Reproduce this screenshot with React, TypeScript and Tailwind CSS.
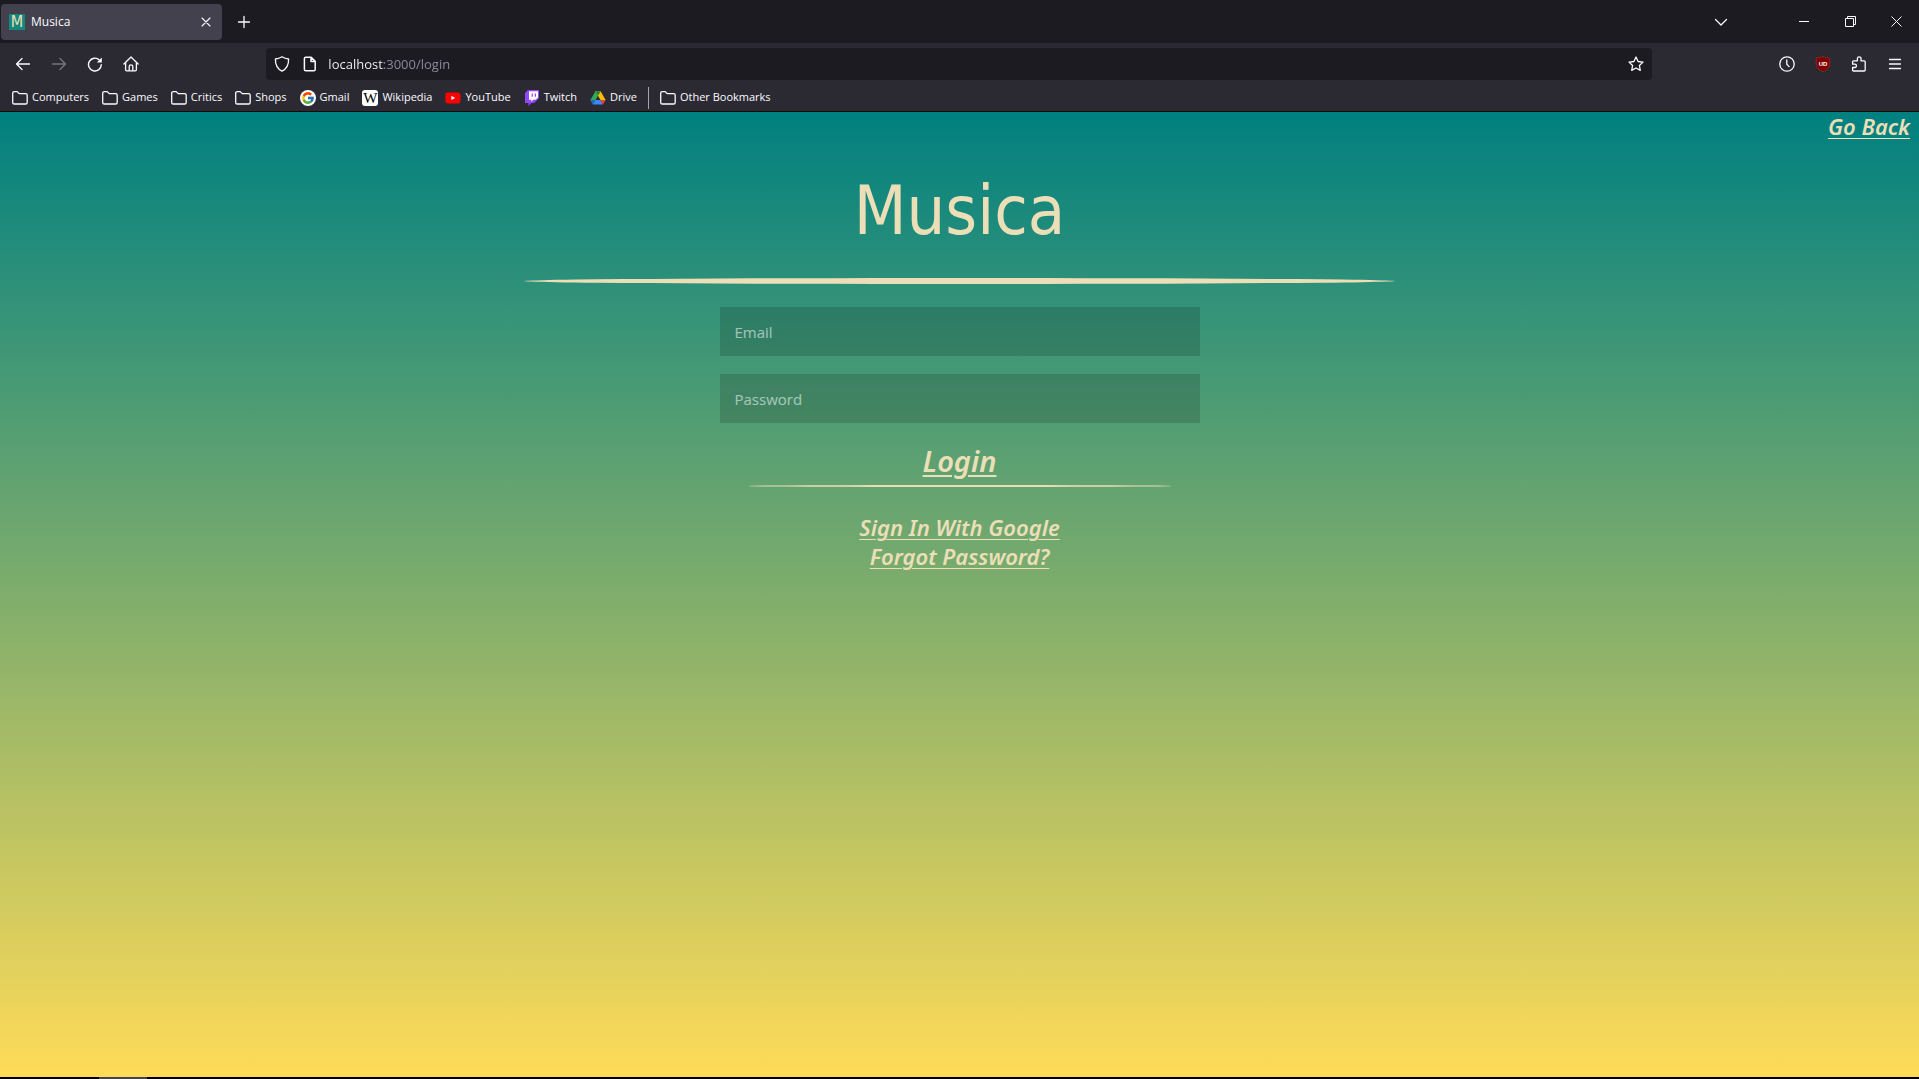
import type { ReactNode } from "react";
import { FcGoogle } from "react-icons/fc";

const uiFont = "font-['Open_Sans','Noto_Sans',sans-serif]";
const linkStyle =
  "text-[#ecdfb8] underline decoration-1 underline-offset-[3px] font-['Noto_Sans',sans-serif] italic font-semibold";

function Line({ d, width = 1.3 }: { d: string; width?: number }) {
  return (
    <svg
      width="16"
      height="16"
      viewBox="0 0 16 16"
      fill="none"
      stroke="currentColor"
      strokeWidth={width}
      strokeLinecap="round"
      strokeLinejoin="round"
      aria-hidden="true"
      className="shrink-0"
    >
      <path d={d} />
    </svg>
  );
}

function Folder() {
  return (
    <Line d="M.7 3.2a1.6 1.6 0 0 1 1.6-1.6h2.9l2 2h6.4a1.6 1.6 0 0 1 1.6 1.6v7.2a1.6 1.6 0 0 1-1.6 1.6H2.3a1.6 1.6 0 0 1-1.6-1.6z" />
  );
}

function Wikipedia() {
  return (
    <span className="flex size-4 items-center justify-center rounded-[3px] bg-white font-['Liberation_Serif',serif] text-[15px] leading-4 text-black">
      W
    </span>
  );
}

function YouTube() {
  return (
    <svg width="16" height="16" viewBox="0 0 16 16" aria-hidden="true">
      <rect x="0.3" y="2.4" width="15.2" height="11" rx="2.8" fill="#f00" />
      <path d="M6.4 5.8v4.2l3.7-2.1z" fill="#fff" />
    </svg>
  );
}

function Twitch() {
  return (
    <svg width="16" height="16" viewBox="0 0 16 16" aria-hidden="true">
      <path d="M4 0 1 3v10h3.5v3l3-3h2.6L15 8.2V0z" fill="#9146ff" />
      <path d="M5 1.2v8.6h2.3v2l2-2h2.4L14 7.6V1.2z" fill="#fff" />
      <path d="M8.2 3.4v3.4M11.4 3.4v3.4" stroke="#9146ff" strokeWidth="1.2" />
    </svg>
  );
}

function Drive() {
  return (
    <svg width="16" height="16" viewBox="0 0 16 16" aria-hidden="true">
      <path d="M5.4 1.2h5.2L8 5.7 3 14.5.4 10z" fill="#34a853" />
      <path d="M5.4 1.2h5.2L15.6 10h-5.1z" fill="#fbbc04" />
      <path d="M5.4 1.2h5.2L8 5.8z" fill="#188038" />
      <path d="M.4 10h5.1L3 14.5z" fill="#1967d2" />
      <path d="M5.5 10h5l2.5 4.5H3z" fill="#4285f4" />
      <path d="M10.5 10h5.1L13 14.5z" fill="#ea4335" />
    </svg>
  );
}

function Gmail() {
  return (
    <span className="flex size-4 items-center justify-center rounded-full bg-white">
      <FcGoogle size={14} />
    </span>
  );
}

const bookmarks: { label: string; icon: ReactNode }[] = [
  { label: "Computers", icon: <Folder /> },
  { label: "Games", icon: <Folder /> },
  { label: "Critics", icon: <Folder /> },
  { label: "Shops", icon: <Folder /> },
  { label: "Gmail", icon: <Gmail /> },
  { label: "Wikipedia", icon: <Wikipedia /> },
  { label: "YouTube", icon: <YouTube /> },
  { label: "Twitch", icon: <Twitch /> },
  { label: "Drive", icon: <Drive /> },
];

function Bookmark({ label, icon }: { label: string; icon: ReactNode }) {
  return (
    <a href="#" className="flex items-center gap-1 whitespace-nowrap">
      {icon}
      {label}
    </a>
  );
}

function ToolButton({ label, dim, children }: { label: string; dim?: boolean; children: ReactNode }) {
  return (
    <button
      type="button"
      aria-label={label}
      disabled={dim}
      className={
        dim
          ? "flex h-8 w-9 shrink-0 items-center justify-center text-[#77767e]"
          : "flex h-8 w-9 shrink-0 items-center justify-center"
      }
    >
      {children}
    </button>
  );
}

function WindowButton({ label, children }: { label: string; children: ReactNode }) {
  return (
    <button type="button" aria-label={label} className="flex h-full w-[46px] items-center justify-center">
      <svg width="11" height="11" viewBox="0 0 11 11" fill="none" stroke="currentColor" aria-hidden="true">
        {children}
      </svg>
    </button>
  );
}

function TitleBar() {
  return (
    <div className="flex h-[43px] items-center bg-[#1c1b22]">
      <div className="ml-px flex h-9 w-[221px] items-center gap-1.5 rounded bg-[#42414d] px-2">
        <span className="flex size-4 items-center justify-center bg-[#15877c] font-['DejaVu_Sans_Condensed',sans-serif] text-base leading-4 text-[#ecdfb8]">
          M
        </span>
        <span className="flex-1">Musica</span>
        <button type="button" aria-label="Close tab" className="flex size-4 items-center justify-center">
          <Line d="M4 4l8 8M12 4l-8 8" width={1.1} />
        </button>
      </div>
      <button type="button" aria-label="New tab" className="ml-[10px] flex size-6 items-center justify-center">
        <Line d="M8 2.5v11M2.5 8h11" />
      </button>
      <div className="ml-auto flex h-full items-center">
        <button type="button" aria-label="List all tabs" className="mr-10 flex h-8 w-10 items-center justify-center">
          <Line d="M2.5 5.5 8 11l5.5-5.5" />
        </button>
        <WindowButton label="Minimize">
          <path d="M0 5.5h10" />
        </WindowButton>
        <WindowButton label="Restore">
          <path d="M.5 2.5h8v8h-8zM2.5 2.5v-2h8v8h-2" />
        </WindowButton>
        <WindowButton label="Close">
          <path d="M.5.5l10 10M10.5.5l-10 10" />
        </WindowButton>
      </div>
    </div>
  );
}

function NavBar() {
  return (
    <div className="flex h-[41px] items-center pl-[5px] pr-1.5">
      <ToolButton label="Back">
        <Line d="M14.5 8H1.5M7 2.5 1.5 8 7 13.5" />
      </ToolButton>
      <ToolButton label="Forward" dim>
        <Line d="M1.5 8h13M9 2.5 14.5 8 9 13.5" />
      </ToolButton>
      <ToolButton label="Reload">
        <svg
          width="16"
          height="16"
          viewBox="0 0 16 16"
          fill="none"
          stroke="currentColor"
          strokeWidth="1.4"
          strokeLinecap="round"
          aria-hidden="true"
        >
          <path d="M14.3 8.6A6.4 6.4 0 1 1 12.4 4" />
          <path d="M14.8 1.4v5H9.8z" fill="currentColor" stroke="none" />
        </svg>
      </ToolButton>
      <ToolButton label="Home">
        <Line d="M.9 8 8 1l7.1 7M2.6 6.5v7.3a1 1 0 0 0 1 1h8.8a1 1 0 0 0 1-1V6.5M6.2 14.6v-4a1.8 1.8 0 0 1 3.6 0v4" />
      </ToolButton>
      <div className="flex-[3]" />
      <div className="flex h-8 flex-[35] items-center rounded bg-[#1c1b22] px-2">
        <Line d="M8 .8c2 1.3 4 2 6.6 2.2.2 5.6-1.6 9.6-6.6 12.2C3 12.6 1.2 8.6 1.4 3 4 2.8 6 2.1 8 .8z" />
        <span className="w-3" />
        <Line
          d="M3.8 1.2h5.4l4 4v8.2a1.4 1.4 0 0 1-1.4 1.4H3.8a1.4 1.4 0 0 1-1.4-1.4V2.6a1.4 1.4 0 0 1 1.4-1.4zM9 1.2v4.2h4.2z"
          width={1.5}
        />
        <input
          aria-label="Address"
          defaultValue="localhost:3000/login"
          className="ml-[10px] block min-w-0 flex-1 bg-[linear-gradient(to_right,#fbfbfe_56px,#8f8f97_56px)] bg-clip-text text-[13px] leading-5 text-transparent caret-white outline-none"
        />
        <button type="button" aria-label="Bookmark this page">
          <Line d="M8 1l2.1 4.5 4.9.6-3.6 3.4.9 4.9L8 12l-4.3 2.4.9-4.9L1 6.1l4.9-.6z" />
        </button>
      </div>
      <div className="flex-[3]" />
      <ToolButton label="History">
        <Line d="M8 .8a7.2 7.2 0 1 1 0 14.4A7.2 7.2 0 0 1 8 .8zM7.8 4v4.3l2.3 2.3" />
      </ToolButton>
      <ToolButton label="Ad blocker">
        <svg width="16" height="16" viewBox="0 0 16 16" aria-hidden="true">
          <path
            d="M8 .3c2 1.3 4 1.7 6.8 1.7v6c0 4-2.8 6-6.8 7.7C4 14 1.2 12 1.2 8V2C4 2 6 1.6 8 .3z"
            fill="#800000"
            stroke="#a33c3c"
            strokeWidth="0.5"
          />
          <text x="8" y="10" textAnchor="middle" fontSize="6" fontWeight="700" fontFamily="Liberation Sans" fill="#fff">
            UD
          </text>
        </svg>
      </ToolButton>
      <ToolButton label="Extensions">
        <Line d="M2.6 15h10.6a1 1 0 0 0 1-1V5.8a1 1 0 0 0-1-1H10V2.6a1.8 1.8 0 0 0-3.6 0v2.2H2.6a1 1 0 0 0-1 1v2.4h2.2a1.6 1.6 0 0 1 0 3.3H1.6V14a1 1 0 0 0 1 1z" />
      </ToolButton>
      <ToolButton label="Menu">
        <Line d="M2.5 3.5h11M2.5 8h11M2.5 12.5h11" />
      </ToolButton>
    </div>
  );
}

function Field({ label, type }: { label: string; type: string }) {
  return (
    <input
      type={type}
      aria-label={label}
      placeholder={label}
      className="mb-[18px] block h-[49px] w-full bg-black/15 px-[15px] font-['Open_Sans',sans-serif] text-[15px] text-white outline-none placeholder:text-white/55"
    />
  );
}

export default function App() {
  return (
    <div className="flex min-h-screen flex-col">
      <header className={`${uiFont} border-b border-[#0c0c0d] bg-[#2b2a33] text-xs text-[#fbfbfe]`}>
        <TitleBar />
        <NavBar />
        <nav className="flex h-[27px] items-center gap-[13px] pl-3 text-[11px]">
          {bookmarks.map((b) => (
            <Bookmark key={b.label} label={b.label} icon={b.icon} />
          ))}
          <span className="-mx-0.5 h-[22px] w-px bg-[#a5a5ab]" />
          <Bookmark label="Other Bookmarks" icon={<Folder />} />
        </nav>
      </header>

      <main className="flex flex-1 flex-col bg-linear-to-b/srgb from-[#008080] to-[#ffdb58]">
        <a href="#" className={`${linkStyle} mr-[9px] self-end text-[22px] leading-[29px]`}>
          Go Back
        </a>
        <h1 className="mt-6 text-center font-['DejaVu_Sans_Condensed',sans-serif] text-[68px] leading-[92px] text-[#ecdfb8]">
          Musica
        </h1>
        <hr className="mx-auto mt-[21px] box-content h-0 w-[45%] rounded-[50%] border-x-4 border-y-[3px] border-[#ecdfb8]" />
        <form className="mx-auto mt-[23px] flex w-[480px] flex-col items-center">
          <Field label="Email" type="email" />
          <Field label="Password" type="password" />
          <button type="button" className={`${linkStyle} mt-0.5 text-[29px] leading-9 decoration-2`}>
            Login
          </button>
          <hr className="mt-[6px] h-0.5 w-[424px] rounded-[50%] border-0 bg-[#ecdfb8]" />
          <a href="#" className={`${linkStyle} mt-[26px] text-[22px] leading-[29px]`}>
            Sign In With Google
          </a>
          <a href="#" className={`${linkStyle} text-[22px] leading-[29px]`}>
            Forgot Password?
          </a>
        </form>
      </main>

      <footer className="h-0.5 bg-black">
        <div className="ml-[99px] h-full w-12 bg-[#454343]" />
      </footer>
    </div>
  );
}
